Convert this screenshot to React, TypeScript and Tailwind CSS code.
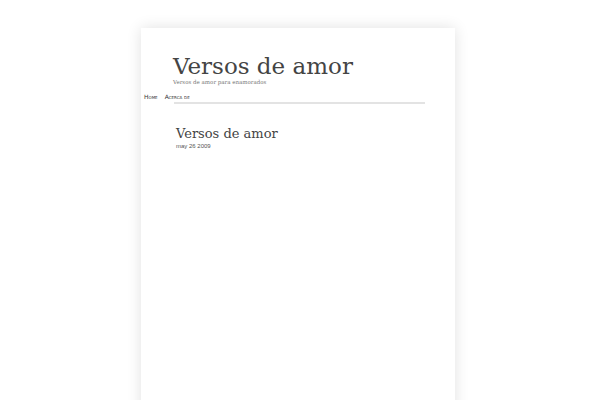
export default function App() {
  const nav = ['Home', 'Acerca de'];

  return (
    <div className="h-[400px] w-[600px] overflow-hidden bg-white antialiased">
      <div className="ml-[141px] mt-[28px] h-[400px] w-[314px] bg-white shadow-[0_0_14px_rgba(0,0,0,0.12)]">
        <header className="pl-[32px] pt-[25px]">
          <h1 className="font-['DejaVu_Serif',serif] text-[23px] leading-[26px] text-[#444]">
            Versos de amor
          </h1>
          <p className="font-['DejaVu_Serif',serif] text-[5.5px] leading-[6px] text-[#777]">
            Versos de amor para enamorados
          </p>
        </header>
        <nav className="mt-[8px] flex gap-[7px] pl-[3px] font-['DejaVu_Sans',sans-serif] text-[6px] leading-[8px] text-[#333] [font-variant:small-caps]">
          {nav.map((item) => (
            <a key={item} href="#">
              {item}
            </a>
          ))}
        </nav>
        <div className="ml-[33px] mt-[1px] h-[2px] w-[251px] bg-[#e3e3e3]" />
        <article className="pl-[35px] pt-[22px]">
          <h2 className="font-['DejaVu_Serif',serif] text-[13px] leading-[16px] text-[#444]">Versos de amor</h2>
          <p className="font-['Liberation_Sans',sans-serif] text-[6px] leading-[8px] text-[#555]">may 26 2009</p>
        </article>
      </div>
    </div>
  );
}
